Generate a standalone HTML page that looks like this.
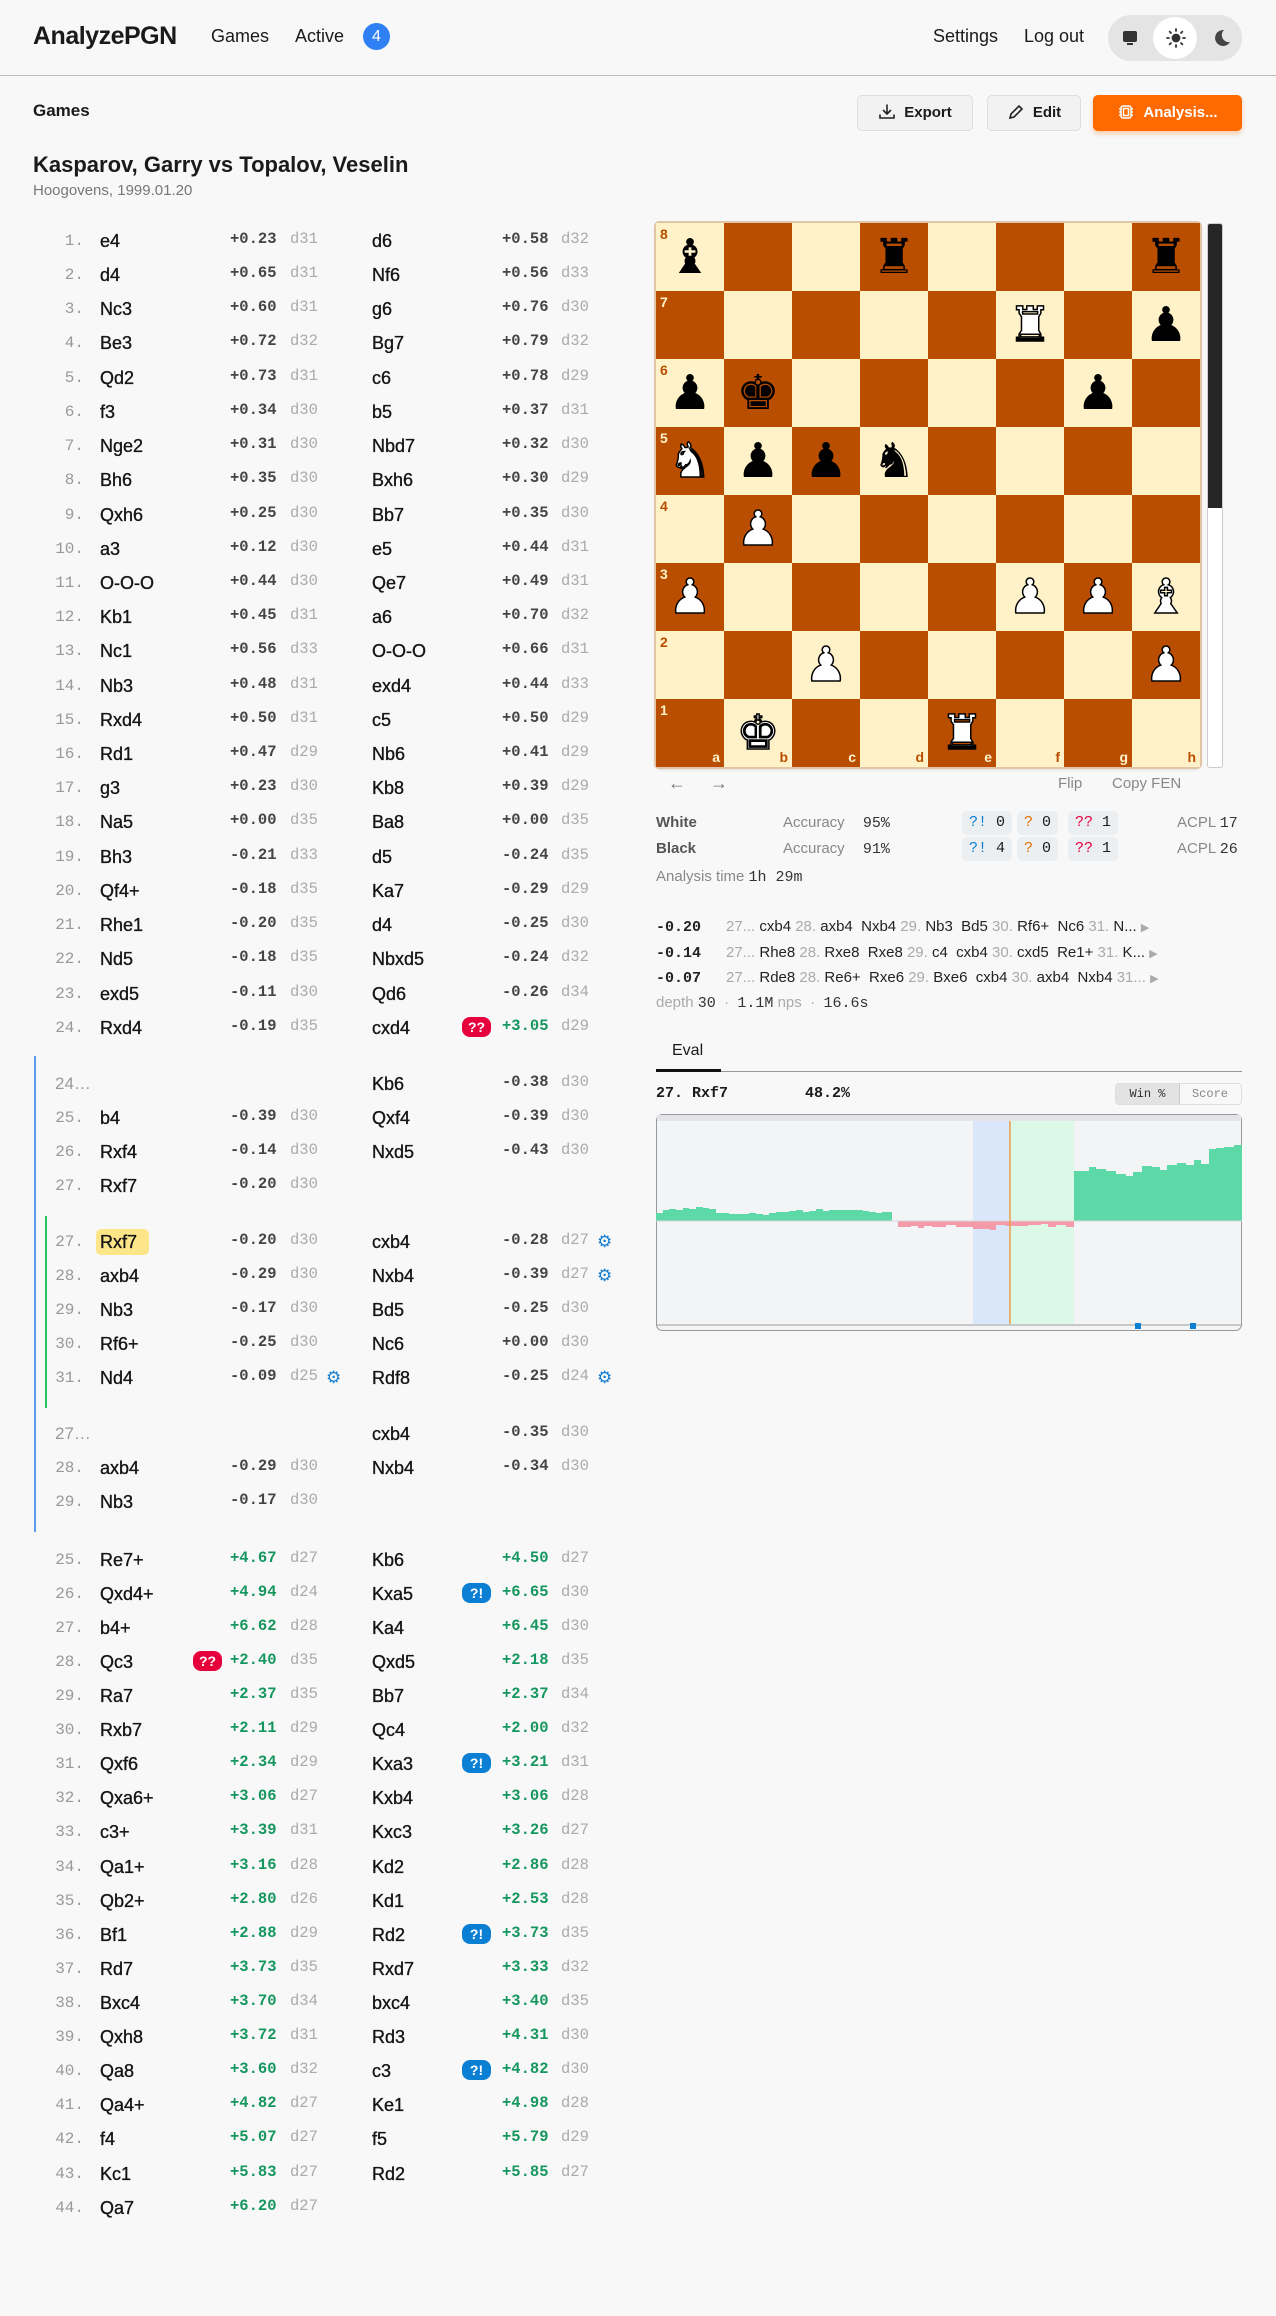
<!DOCTYPE html>
<html><head><meta charset="utf-8">
<style>
*{box-sizing:border-box;margin:0;padding:0}
body{width:1276px;height:2316px;background:#f8f8f8;font-family:"Liberation Sans",sans-serif;color:#1a1a1a;position:relative;overflow:hidden}
.a{position:absolute;white-space:nowrap}
.mono{font-family:"Liberation Mono",monospace}
.r{position:absolute;left:0;width:640px;height:34px;line-height:34px}
.r span{position:absolute;top:0;white-space:nowrap}
.n{left:30px;width:54px;text-align:right;font-family:"Liberation Mono",monospace;font-size:16px;color:#999}
.w{left:100px;font-size:18px;color:#151515;-webkit-text-stroke:0.35px #151515}
.b{left:372px;font-size:18px;color:#151515;-webkit-text-stroke:0.35px #151515}
.we,.be{font-family:"Liberation Mono",monospace;font-size:15.5px;font-weight:bold;color:#444;top:-2px!important}
.we{left:230px}.be{left:502px}
.wd,.bd{font-family:"Liberation Mono",monospace;font-size:15.5px;color:#aaa;top:-2px!important}
.wd{left:290px}.bd{left:561px}
.g{color:#16965f!important}
.bdg{height:20px;line-height:20px;width:29px;border-radius:8px;color:#fff;font-size:14px;font-weight:bold;text-align:center;top:6px!important}
.red{background:#e6003c}.blu{background:#0a7fd4}
.bb{left:462px}.wb{left:193px}
.gear{color:#1a7fd0;font-family:"DejaVu Sans",sans-serif;font-size:17px}
.board{position:absolute;left:656px;top:223px;width:544px;height:544px;display:grid;grid-template-columns:repeat(8,68px);grid-template-rows:repeat(8,68px);outline:2px solid #e2c4a6;border-radius:3px;box-shadow:0 2px 4px rgba(0,0,0,.15)}
.board div{position:relative;font-family:"DejaVu Sans",sans-serif;font-size:48px;line-height:68px;text-align:center}
.l{background:#fff2c9}.d{background:#b94e00}
.pb{color:#000}
.pw{color:#fff;-webkit-text-stroke:1.5px #000}
.rk,.fl{position:absolute;font-family:"Liberation Sans",sans-serif;font-size:14px;font-weight:bold;line-height:14px}
.rk{left:4px;top:4px}.fl{right:4px;bottom:3px}
.l .rk,.l .fl{color:#b94e00}.d .rk,.d .fl{color:#fff2c9}
.btn{position:absolute;top:95px;height:36px;border:1px solid #ddd;background:#f2f2f2;border-radius:5px;font-size:15px;font-weight:bold;line-height:34px;text-align:center}
.sb{display:inline-block;height:24px;line-height:24px;padding:0 7px;background:#eceff1;border-radius:5px;font-family:"Liberation Mono",monospace;font-size:15px}
.pv{position:absolute;left:656px;font-size:15px;color:#222;white-space:nowrap}
.pv b{font-family:"Liberation Mono",monospace;display:inline-block;width:70px}
.pv i{font-style:normal;color:#aaa}
</style></head><body>

<div class="a" style="left:33px;top:22px;font-size:25px;font-weight:bold;letter-spacing:-0.5px">AnalyzePGN</div>
<div class="a" style="left:211px;top:26px;font-size:18px">Games</div>
<div class="a" style="left:295px;top:26px;font-size:18px">Active</div>
<div class="a" style="left:363px;top:23px;width:27px;height:27px;border-radius:50%;background:#2f80f5;color:#fff;font-size:16px;text-align:center;line-height:27px">4</div>
<div class="a" style="left:933px;top:26px;font-size:18px">Settings</div>
<div class="a" style="left:1024px;top:26px;font-size:18px">Log out</div>
<div class="a" style="left:1108px;top:15px;width:134px;height:46px;border-radius:23px;background:#e4e4e4"></div>
<div class="a" style="left:1153px;top:17px;width:44px;height:42px;border-radius:50%;background:#fff"></div>
<svg class="a" style="left:1120px;top:28px" width="20" height="20" viewBox="0 0 20 20"><rect x="3" y="3" width="14" height="11" rx="2" fill="#333"/><rect x="7" y="15" width="6" height="2" fill="#333"/></svg>
<svg class="a" style="left:1165px;top:27px" width="22" height="22" viewBox="0 0 22 22" stroke="#333" stroke-width="1.8" stroke-linecap="round"><circle cx="11" cy="11" r="3.5" fill="#333"/><path d="M11 2v2M11 18v2M2 11h2M18 11h2M4.6 4.6l1.4 1.4M16 16l1.4 1.4M4.6 17.4L6 16M16 6l1.4-1.4"/></svg>
<svg class="a" style="left:1210px;top:27px" width="22" height="22" viewBox="0 0 22 22"><path d="M14 3a8 8 0 1 0 6 12A7 7 0 0 1 14 3z" fill="#444"/></svg>
<div class="a" style="left:0;top:75px;width:1276px;height:1px;background:#bbb"></div>

<div class="a" style="left:33px;top:101px;font-size:17px;font-weight:bold">Games</div>
<div class="btn" style="left:857px;width:116px"><svg style="vertical-align:-4px;margin-right:8px" width="18" height="18" viewBox="0 0 18 18" fill="none" stroke="#222" stroke-width="1.6" stroke-linecap="round"><path d="M9 2v9M5.5 7.5L9 11l3.5-3.5M2 12v3h14v-3"/></svg>Export</div>
<div class="btn" style="left:987px;width:94px"><svg style="vertical-align:-4px;margin-right:8px" width="18" height="18" viewBox="0 0 18 18" fill="none" stroke="#222" stroke-width="1.6"><path d="M3 15l1-4 8-8 3 3-8 8z"/></svg>Edit</div>
<div class="btn" style="left:1093px;width:149px;background:#ff6a00;border-color:#ff6a00;color:#fff;box-shadow:0 3px 5px rgba(255,106,0,.3)"><svg style="vertical-align:-4px;margin-right:8px" width="18" height="18" viewBox="0 0 18 18" fill="none" stroke="#fff" stroke-width="1.5"><rect x="4" y="3" width="10" height="12" rx="2"/><rect x="6.5" y="5.5" width="5" height="7"/><path d="M2 6h2M2 9h2M2 12h2M14 6h2M14 9h2M14 12h2"/></svg>Analysis...</div>

<div class="a" style="left:33px;top:152px;font-size:22px;font-weight:bold;color:#1a1a1a">Kasparov, Garry vs Topalov, Veselin</div>
<div class="a" style="left:33px;top:182px;font-size:15px;color:#777">Hoogovens, 1999.01.20</div>

<div class="r" style="top:224px"><span class="n">1.</span><span class="w">e4</span><span class="we">+0.23</span><span class="wd">d31</span><span class="b">d6</span><span class="be">+0.58</span><span class="bd">d32</span></div>
<div class="r" style="top:258px"><span class="n">2.</span><span class="w">d4</span><span class="we">+0.65</span><span class="wd">d31</span><span class="b">Nf6</span><span class="be">+0.56</span><span class="bd">d33</span></div>
<div class="r" style="top:292px"><span class="n">3.</span><span class="w">Nc3</span><span class="we">+0.60</span><span class="wd">d31</span><span class="b">g6</span><span class="be">+0.76</span><span class="bd">d30</span></div>
<div class="r" style="top:326px"><span class="n">4.</span><span class="w">Be3</span><span class="we">+0.72</span><span class="wd">d32</span><span class="b">Bg7</span><span class="be">+0.79</span><span class="bd">d32</span></div>
<div class="r" style="top:361px"><span class="n">5.</span><span class="w">Qd2</span><span class="we">+0.73</span><span class="wd">d31</span><span class="b">c6</span><span class="be">+0.78</span><span class="bd">d29</span></div>
<div class="r" style="top:395px"><span class="n">6.</span><span class="w">f3</span><span class="we">+0.34</span><span class="wd">d30</span><span class="b">b5</span><span class="be">+0.37</span><span class="bd">d31</span></div>
<div class="r" style="top:429px"><span class="n">7.</span><span class="w">Nge2</span><span class="we">+0.31</span><span class="wd">d30</span><span class="b">Nbd7</span><span class="be">+0.32</span><span class="bd">d30</span></div>
<div class="r" style="top:463px"><span class="n">8.</span><span class="w">Bh6</span><span class="we">+0.35</span><span class="wd">d30</span><span class="b">Bxh6</span><span class="be">+0.30</span><span class="bd">d29</span></div>
<div class="r" style="top:498px"><span class="n">9.</span><span class="w">Qxh6</span><span class="we">+0.25</span><span class="wd">d30</span><span class="b">Bb7</span><span class="be">+0.35</span><span class="bd">d30</span></div>
<div class="r" style="top:532px"><span class="n">10.</span><span class="w">a3</span><span class="we">+0.12</span><span class="wd">d30</span><span class="b">e5</span><span class="be">+0.44</span><span class="bd">d31</span></div>
<div class="r" style="top:566px"><span class="n">11.</span><span class="w">O-O-O</span><span class="we">+0.44</span><span class="wd">d30</span><span class="b">Qe7</span><span class="be">+0.49</span><span class="bd">d31</span></div>
<div class="r" style="top:600px"><span class="n">12.</span><span class="w">Kb1</span><span class="we">+0.45</span><span class="wd">d31</span><span class="b">a6</span><span class="be">+0.70</span><span class="bd">d32</span></div>
<div class="r" style="top:634px"><span class="n">13.</span><span class="w">Nc1</span><span class="we">+0.56</span><span class="wd">d33</span><span class="b">O-O-O</span><span class="be">+0.66</span><span class="bd">d31</span></div>
<div class="r" style="top:669px"><span class="n">14.</span><span class="w">Nb3</span><span class="we">+0.48</span><span class="wd">d31</span><span class="b">exd4</span><span class="be">+0.44</span><span class="bd">d33</span></div>
<div class="r" style="top:703px"><span class="n">15.</span><span class="w">Rxd4</span><span class="we">+0.50</span><span class="wd">d31</span><span class="b">c5</span><span class="be">+0.50</span><span class="bd">d29</span></div>
<div class="r" style="top:737px"><span class="n">16.</span><span class="w">Rd1</span><span class="we">+0.47</span><span class="wd">d29</span><span class="b">Nb6</span><span class="be">+0.41</span><span class="bd">d29</span></div>
<div class="r" style="top:771px"><span class="n">17.</span><span class="w">g3</span><span class="we">+0.23</span><span class="wd">d30</span><span class="b">Kb8</span><span class="be">+0.39</span><span class="bd">d29</span></div>
<div class="r" style="top:805px"><span class="n">18.</span><span class="w">Na5</span><span class="we">+0.00</span><span class="wd">d35</span><span class="b">Ba8</span><span class="be">+0.00</span><span class="bd">d35</span></div>
<div class="r" style="top:840px"><span class="n">19.</span><span class="w">Bh3</span><span class="we">-0.21</span><span class="wd">d33</span><span class="b">d5</span><span class="be">-0.24</span><span class="bd">d35</span></div>
<div class="r" style="top:874px"><span class="n">20.</span><span class="w">Qf4+</span><span class="we">-0.18</span><span class="wd">d35</span><span class="b">Ka7</span><span class="be">-0.29</span><span class="bd">d29</span></div>
<div class="r" style="top:908px"><span class="n">21.</span><span class="w">Rhe1</span><span class="we">-0.20</span><span class="wd">d35</span><span class="b">d4</span><span class="be">-0.25</span><span class="bd">d30</span></div>
<div class="r" style="top:942px"><span class="n">22.</span><span class="w">Nd5</span><span class="we">-0.18</span><span class="wd">d35</span><span class="b">Nbxd5</span><span class="be">-0.24</span><span class="bd">d32</span></div>
<div class="r" style="top:977px"><span class="n">23.</span><span class="w">exd5</span><span class="we">-0.11</span><span class="wd">d30</span><span class="b">Qd6</span><span class="be">-0.26</span><span class="bd">d34</span></div>
<div class="r" style="top:1011px"><span class="n">24.</span><span class="w">Rxd4</span><span class="we">-0.19</span><span class="wd">d35</span><span class="b">cxd4</span><span class="bdg red bb">??</span><span class="be g">+3.05</span><span class="bd">d29</span></div>

<div class="a" style="left:34px;top:1056px;width:2px;height:476px;background:#5b9cf0"></div>
<div class="a" style="left:45px;top:1216px;width:2px;height:192px;background:#22c55e"></div>

<div class="r" style="top:1067px"><span class="n" style="text-align:left;left:55px;font-family:'Liberation Sans',sans-serif;font-size:17px">24…</span><span class="b">Kb6</span><span class="be">-0.38</span><span class="bd">d30</span></div>
<div class="r" style="top:1101px"><span class="n">25.</span><span class="w">b4</span><span class="we">-0.39</span><span class="wd">d30</span><span class="b">Qxf4</span><span class="be">-0.39</span><span class="bd">d30</span></div>
<div class="r" style="top:1135px"><span class="n">26.</span><span class="w">Rxf4</span><span class="we">-0.14</span><span class="wd">d30</span><span class="b">Nxd5</span><span class="be">-0.43</span><span class="bd">d30</span></div>
<div class="r" style="top:1169px"><span class="n">27.</span><span class="w">Rxf7</span><span class="we">-0.20</span><span class="wd">d30</span></div>

<div class="a" style="left:96px;top:1229px;width:53px;height:26px;border-radius:5px;background:#fde68a"></div>
<div class="r" style="top:1225px"><span class="n">27.</span><span class="w">Rxf7</span><span class="we">-0.20</span><span class="wd">d30</span><span class="b">cxb4</span><span class="be">-0.28</span><span class="bd">d27</span><span class="gear" style="left:597px">⚙</span></div>
<div class="r" style="top:1259px"><span class="n">28.</span><span class="w">axb4</span><span class="we">-0.29</span><span class="wd">d30</span><span class="b">Nxb4</span><span class="be">-0.39</span><span class="bd">d27</span><span class="gear" style="left:597px">⚙</span></div>
<div class="r" style="top:1293px"><span class="n">29.</span><span class="w">Nb3</span><span class="we">-0.17</span><span class="wd">d30</span><span class="b">Bd5</span><span class="be">-0.25</span><span class="bd">d30</span></div>
<div class="r" style="top:1327px"><span class="n">30.</span><span class="w">Rf6+</span><span class="we">-0.25</span><span class="wd">d30</span><span class="b">Nc6</span><span class="be">+0.00</span><span class="bd">d30</span></div>
<div class="r" style="top:1361px"><span class="n">31.</span><span class="w">Nd4</span><span class="we">-0.09</span><span class="wd">d25</span><span class="gear" style="left:326px">⚙</span><span class="b">Rdf8</span><span class="be">-0.25</span><span class="bd">d24</span><span class="gear" style="left:597px">⚙</span></div>

<div class="r" style="top:1417px"><span class="n" style="text-align:left;left:55px;font-family:'Liberation Sans',sans-serif;font-size:17px">27…</span><span class="b">cxb4</span><span class="be">-0.35</span><span class="bd">d30</span></div>
<div class="r" style="top:1451px"><span class="n">28.</span><span class="w">axb4</span><span class="we">-0.29</span><span class="wd">d30</span><span class="b">Nxb4</span><span class="be">-0.34</span><span class="bd">d30</span></div>
<div class="r" style="top:1485px"><span class="n">29.</span><span class="w">Nb3</span><span class="we">-0.17</span><span class="wd">d30</span></div>

<div class="r" style="top:1543px"><span class="n">25.</span><span class="w">Re7+</span><span class="we g">+4.67</span><span class="wd">d27</span><span class="b">Kb6</span><span class="be g">+4.50</span><span class="bd">d27</span></div>
<div class="r" style="top:1577px"><span class="n">26.</span><span class="w">Qxd4+</span><span class="we g">+4.94</span><span class="wd">d24</span><span class="b">Kxa5</span><span class="bdg blu bb">?!</span><span class="be g">+6.65</span><span class="bd">d30</span></div>
<div class="r" style="top:1611px"><span class="n">27.</span><span class="w">b4+</span><span class="we g">+6.62</span><span class="wd">d28</span><span class="b">Ka4</span><span class="be g">+6.45</span><span class="bd">d30</span></div>
<div class="r" style="top:1645px"><span class="n">28.</span><span class="w">Qc3</span><span class="bdg red wb">??</span><span class="we g">+2.40</span><span class="wd">d35</span><span class="b">Qxd5</span><span class="be g">+2.18</span><span class="bd">d35</span></div>
<div class="r" style="top:1679px"><span class="n">29.</span><span class="w">Ra7</span><span class="we g">+2.37</span><span class="wd">d35</span><span class="b">Bb7</span><span class="be g">+2.37</span><span class="bd">d34</span></div>
<div class="r" style="top:1713px"><span class="n">30.</span><span class="w">Rxb7</span><span class="we g">+2.11</span><span class="wd">d29</span><span class="b">Qc4</span><span class="be g">+2.00</span><span class="bd">d32</span></div>
<div class="r" style="top:1747px"><span class="n">31.</span><span class="w">Qxf6</span><span class="we g">+2.34</span><span class="wd">d29</span><span class="b">Kxa3</span><span class="bdg blu bb">?!</span><span class="be g">+3.21</span><span class="bd">d31</span></div>
<div class="r" style="top:1781px"><span class="n">32.</span><span class="w">Qxa6+</span><span class="we g">+3.06</span><span class="wd">d27</span><span class="b">Kxb4</span><span class="be g">+3.06</span><span class="bd">d28</span></div>
<div class="r" style="top:1815px"><span class="n">33.</span><span class="w">c3+</span><span class="we g">+3.39</span><span class="wd">d31</span><span class="b">Kxc3</span><span class="be g">+3.26</span><span class="bd">d27</span></div>
<div class="r" style="top:1850px"><span class="n">34.</span><span class="w">Qa1+</span><span class="we g">+3.16</span><span class="wd">d28</span><span class="b">Kd2</span><span class="be g">+2.86</span><span class="bd">d28</span></div>
<div class="r" style="top:1884px"><span class="n">35.</span><span class="w">Qb2+</span><span class="we g">+2.80</span><span class="wd">d26</span><span class="b">Kd1</span><span class="be g">+2.53</span><span class="bd">d28</span></div>
<div class="r" style="top:1918px"><span class="n">36.</span><span class="w">Bf1</span><span class="we g">+2.88</span><span class="wd">d29</span><span class="b">Rd2</span><span class="bdg blu bb">?!</span><span class="be g">+3.73</span><span class="bd">d35</span></div>
<div class="r" style="top:1952px"><span class="n">37.</span><span class="w">Rd7</span><span class="we g">+3.73</span><span class="wd">d35</span><span class="b">Rxd7</span><span class="be g">+3.33</span><span class="bd">d32</span></div>
<div class="r" style="top:1986px"><span class="n">38.</span><span class="w">Bxc4</span><span class="we g">+3.70</span><span class="wd">d34</span><span class="b">bxc4</span><span class="be g">+3.40</span><span class="bd">d35</span></div>
<div class="r" style="top:2020px"><span class="n">39.</span><span class="w">Qxh8</span><span class="we g">+3.72</span><span class="wd">d31</span><span class="b">Rd3</span><span class="be g">+4.31</span><span class="bd">d30</span></div>
<div class="r" style="top:2054px"><span class="n">40.</span><span class="w">Qa8</span><span class="we g">+3.60</span><span class="wd">d32</span><span class="b">c3</span><span class="bdg blu bb">?!</span><span class="be g">+4.82</span><span class="bd">d30</span></div>
<div class="r" style="top:2088px"><span class="n">41.</span><span class="w">Qa4+</span><span class="we g">+4.82</span><span class="wd">d27</span><span class="b">Ke1</span><span class="be g">+4.98</span><span class="bd">d28</span></div>
<div class="r" style="top:2122px"><span class="n">42.</span><span class="w">f4</span><span class="we g">+5.07</span><span class="wd">d27</span><span class="b">f5</span><span class="be g">+5.79</span><span class="bd">d29</span></div>
<div class="r" style="top:2157px"><span class="n">43.</span><span class="w">Kc1</span><span class="we g">+5.83</span><span class="wd">d27</span><span class="b">Rd2</span><span class="be g">+5.85</span><span class="bd">d27</span></div>
<div class="r" style="top:2191px"><span class="n">44.</span><span class="w">Qa7</span><span class="we g">+6.20</span><span class="wd">d27</span></div>

<div class="board">
<div class="l"><span class="rk">8</span><span class="pb">♝</span></div><div class="d"></div><div class="l"></div><div class="d"><span class="pb">♜</span></div><div class="l"></div><div class="d"></div><div class="l"></div><div class="d"><span class="pb">♜</span></div>
<div class="d"><span class="rk">7</span></div><div class="l"></div><div class="d"></div><div class="l"></div><div class="d"></div><div class="l"><span class="pw">♜</span></div><div class="d"></div><div class="l"><span class="pb">♟</span></div>
<div class="l"><span class="rk">6</span><span class="pb">♟</span></div><div class="d"><span class="pb">♚</span></div><div class="l"></div><div class="d"></div><div class="l"></div><div class="d"></div><div class="l"><span class="pb">♟</span></div><div class="d"></div>
<div class="d"><span class="rk">5</span><span class="pw">♞</span></div><div class="l"><span class="pb">♟</span></div><div class="d"><span class="pb">♟</span></div><div class="l"><span class="pb">♞</span></div><div class="d"></div><div class="l"></div><div class="d"></div><div class="l"></div>
<div class="l"><span class="rk">4</span></div><div class="d"><span class="pw">♟</span></div><div class="l"></div><div class="d"></div><div class="l"></div><div class="d"></div><div class="l"></div><div class="d"></div>
<div class="d"><span class="rk">3</span><span class="pw">♟</span></div><div class="l"></div><div class="d"></div><div class="l"></div><div class="d"></div><div class="l"><span class="pw">♟</span></div><div class="d"><span class="pw">♟</span></div><div class="l"><span class="pw">♝</span></div>
<div class="l"><span class="rk">2</span></div><div class="d"></div><div class="l"><span class="pw">♟</span></div><div class="d"></div><div class="l"></div><div class="d"></div><div class="l"></div><div class="d"><span class="pw">♟</span></div>
<div class="d"><span class="rk">1</span><span class="fl">a</span></div><div class="l"><span class="pw">♚</span><span class="fl">b</span></div><div class="d"><span class="fl">c</span></div><div class="l"><span class="fl">d</span></div><div class="d"><span class="pw">♜</span><span class="fl">e</span></div><div class="l"><span class="fl">f</span></div><div class="d"><span class="fl">g</span></div><div class="l"><span class="fl">h</span></div>
</div>
<div class="a" style="left:1207px;top:223px;width:16px;height:545px;border:1px solid #ccc;border-radius:3px;background:#fff;overflow:hidden"><div style="height:284px;background:#262626"></div></div>

<div class="a" style="left:668px;top:773px;font-size:18px;color:#777">←</div>
<div class="a" style="left:710px;top:773px;font-size:18px;color:#777">→</div>
<div class="a" style="left:1058px;top:775px;font-size:15px;color:#888">Flip</div>
<div class="a" style="left:1112px;top:775px;font-size:15px;color:#888">Copy FEN</div>

<div class="a" style="left:656px;top:814px;font-size:15px;font-weight:bold;color:#555">White</div>
<div class="a" style="left:656px;top:840px;font-size:15px;font-weight:bold;color:#555">Black</div>
<div class="a" style="left:783px;top:814px;font-size:15px;color:#888">Accuracy <span class="mono" style="color:#333;margin-left:14px">95%</span></div>
<div class="a" style="left:783px;top:840px;font-size:15px;color:#888">Accuracy <span class="mono" style="color:#333;margin-left:14px">91%</span></div>
<div class="a" style="left:962px;top:811px"><span class="sb"><span style="color:#0a7fd4">?!</span> 0</span></div>
<div class="a" style="left:1017px;top:811px"><span class="sb"><span style="color:#e07000">?</span> 0</span></div>
<div class="a" style="left:1068px;top:811px"><span class="sb"><span style="color:#e6003c">??</span> 1</span></div>
<div class="a" style="left:962px;top:837px"><span class="sb"><span style="color:#0a7fd4">?!</span> 4</span></div>
<div class="a" style="left:1017px;top:837px"><span class="sb"><span style="color:#e07000">?</span> 0</span></div>
<div class="a" style="left:1068px;top:837px"><span class="sb"><span style="color:#e6003c">??</span> 1</span></div>
<div class="a" style="left:1177px;top:814px;font-size:15px;color:#888">ACPL <span class="mono" style="color:#333">17</span></div>
<div class="a" style="left:1177px;top:840px;font-size:15px;color:#888">ACPL <span class="mono" style="color:#333">26</span></div>
<div class="a" style="left:656px;top:868px;font-size:15px;color:#888">Analysis time <span class="mono" style="color:#333">1h 29m</span></div>

<div class="pv" style="top:918px"><b>-0.20</b><i>27...</i> cxb4 <i>28.</i> axb4 &nbsp;Nxb4 <i>29.</i> Nb3 &nbsp;Bd5 <i>30.</i> Rf6+ &nbsp;Nc6 <i>31.</i> N... <i style="font-size:11px">▶</i></div>
<div class="pv" style="top:944px"><b>-0.14</b><i>27...</i> Rhe8 <i>28.</i> Rxe8 &nbsp;Rxe8 <i>29.</i> c4 &nbsp;cxb4 <i>30.</i> cxd5 &nbsp;Re1+ <i>31.</i> K... <i style="font-size:11px">▶</i></div>
<div class="pv" style="top:969px"><b>-0.07</b><i>27...</i> Rde8 <i>28.</i> Re6+ &nbsp;Rxe6 <i>29.</i> Bxe6 &nbsp;cxb4 <i>30.</i> axb4 &nbsp;Nxb4 <i>31...</i> <i style="font-size:11px">▶</i></div>
<div class="a" style="left:656px;top:994px;font-size:15px;color:#aaa">depth <span class="mono" style="color:#333">30</span> &nbsp;·&nbsp; <span class="mono" style="color:#333">1.1M</span> nps &nbsp;·&nbsp; <span class="mono" style="color:#333">16.6s</span></div>

<div class="a" style="left:672px;top:1042px;font-size:16px">Eval</div>
<div class="a" style="left:656px;top:1071px;width:586px;height:1px;background:#999"></div>
<div class="a" style="left:656px;top:1069px;width:65px;height:3px;background:#111"></div>
<div class="a mono" style="left:656px;top:1085px;font-size:15px;font-weight:bold">27. Rxf7</div>
<div class="a mono" style="left:805px;top:1085px;font-size:15px;font-weight:bold">48.2%</div>
<div class="a" style="left:1115px;top:1083px;width:127px;height:22px;border:1px solid #ddd;border-radius:4px;background:#f8f8f8;font-family:'Liberation Mono',monospace;font-size:12px;line-height:20px;overflow:hidden"><span style="display:inline-block;width:64px;background:#e3e3e3;border-right:1px solid #ccc;text-align:center;color:#333">Win %</span><span style="display:inline-block;width:60px;text-align:center;color:#888">Score</span></div>

<svg class="a" style="left:656px;top:1114px" width="586" height="217" viewBox="0 0 586 217">
<rect x="0.5" y="0.5" width="585" height="216" rx="6" fill="#f3f4f6" stroke="#999"/>
<rect x="1" y="1" width="584" height="6" fill="#e3e5e8"/>
<rect x="317" y="7" width="37" height="204" fill="#dae7fb"/>
<rect x="355" y="7" width="63" height="204" fill="#dcf8e6"/>
<path fill="#5cd9a6" d="M0 107V99H7V96H13V95H20V96H27V94H33V95H40V93H47V94H53V95H60V99H67V99H73V100H80V100H87V100H93V99H100V100H107V101H113V99H120V98H127V98H133V97H140V96H147V98H153V97H160V95H167V97H173V96H180V96H187V96H193V96H200V96H207V97H213V98H220V99H226V98H230V98H236V107Z"/>
<path fill="#f59aa8" d="M242 107V113H255V112H262V114H268V112H276V113H290V111H300V113H317V115H334V116H340V111H350V112H362V112H372V111H385V110H392V113H400V111H410V113H418V107Z"/>
<path fill="#5cd9a6" d="M418 107V57H433V53H440V55H450V57H460V60H470V62H477V58H486V52H496V53H504V56H511V51H521V49H530V51H538V46H545V50H553V35H560V34H568V33H578V31H586V107Z"/>
<line x1="0" y1="107" x2="586" y2="107" stroke="#d7d7d7" stroke-width="1"/>
<line x1="354" y1="7" x2="354" y2="211" stroke="#e8a040" stroke-width="1.5"/>
<rect x="1" y="210" width="584" height="2" fill="#c8c8c8"/>
<rect x="479" y="209" width="6" height="6" fill="#0a7fd4"/>
<rect x="534" y="209" width="6" height="6" fill="#0a7fd4"/>
</svg>

</body></html>
